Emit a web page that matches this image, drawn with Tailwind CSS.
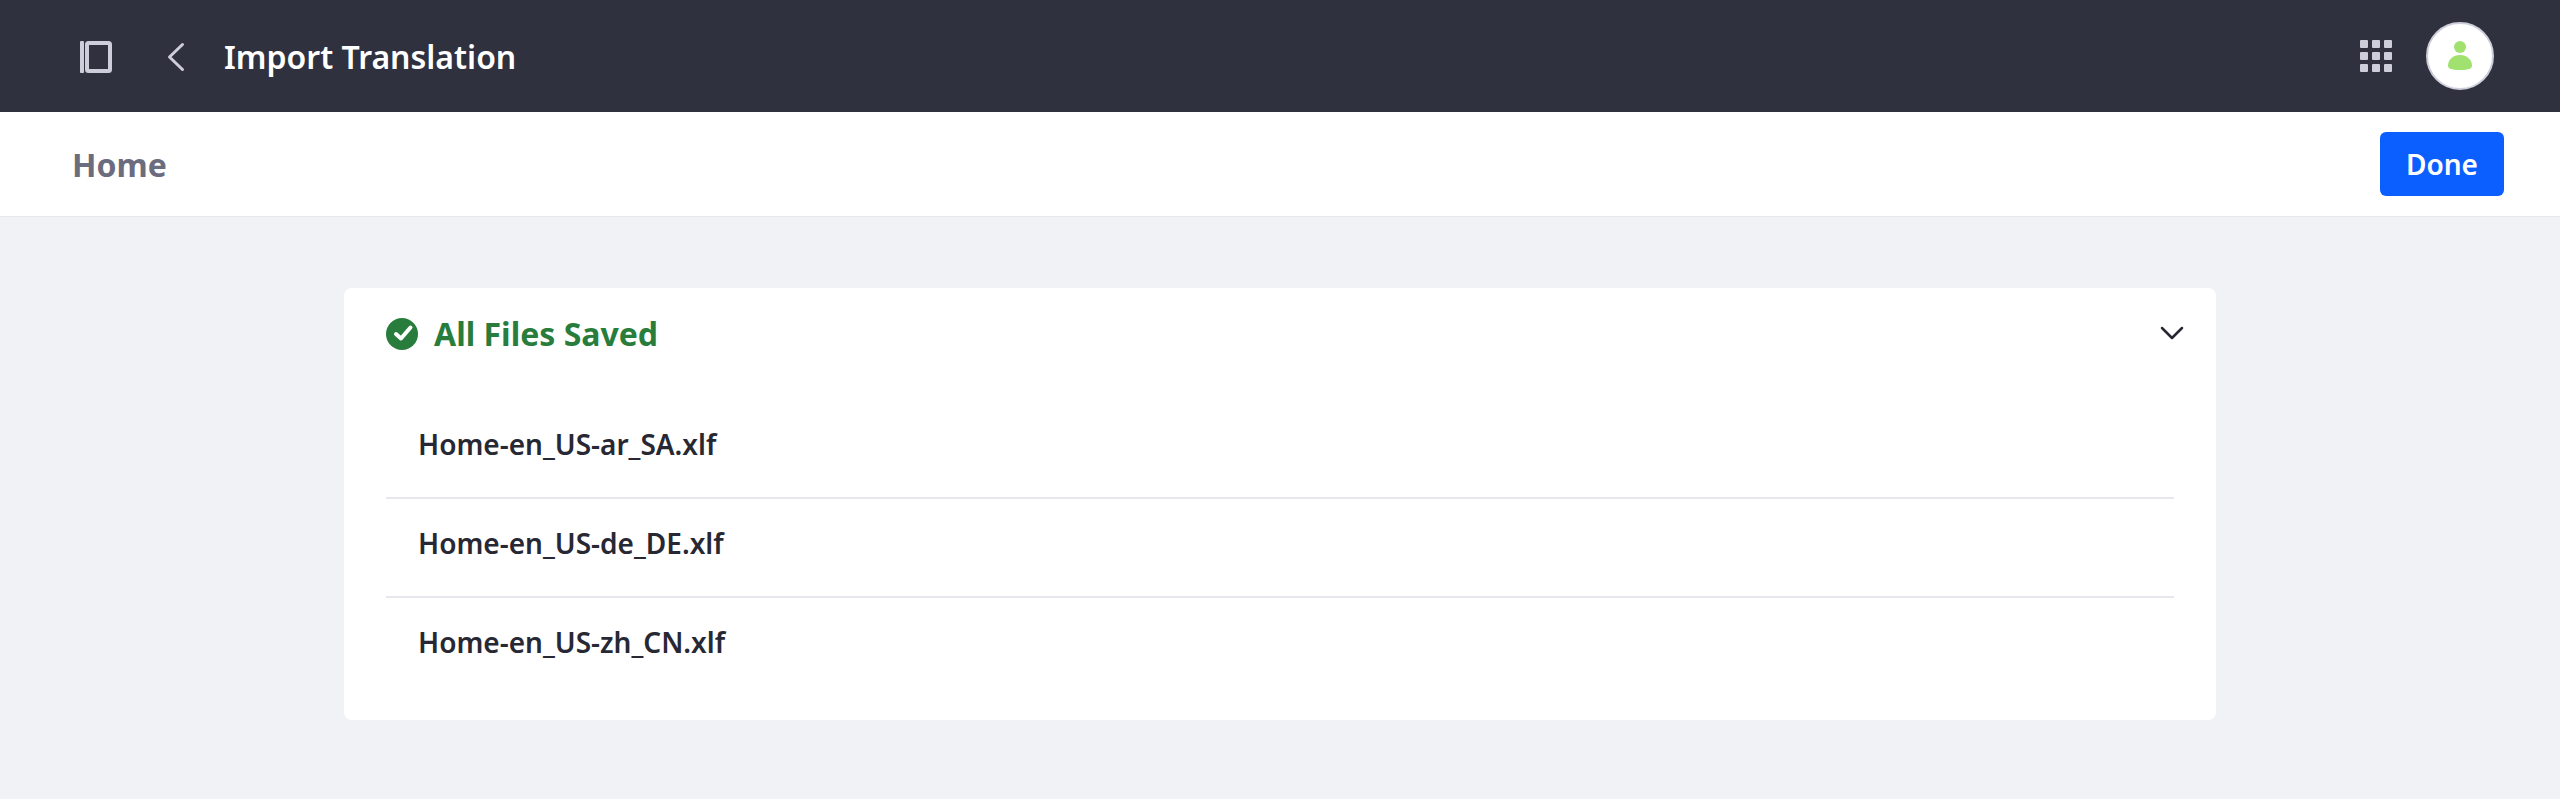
<!DOCTYPE html>
<html>
<head>
  <script src="https://cdn.jsdelivr.net/npm/@tailwindcss/browser@4"></script>
</head>
<body class="bg-[#f1f2f5] font-['Noto_Sans',sans-serif]">
  <div class="h-[799px] overflow-hidden">
    <!-- top bar -->
    <header class="flex items-center h-[112px] bg-[#30313f] pl-[80px] pr-[66px]">
      <svg class="w-[32px] h-[32px] mt-[2px]" viewBox="0 0 32 32" fill="none" stroke="#cdced9" stroke-width="4">
        <path d="M2 1.500v29" stroke-linecap="round"/>
        <rect x="7" y="2" width="23" height="28" rx="1.500"/>
      </svg>
      <svg class="w-[20px] h-[36px] ml-[54px] mt-[2px]" viewBox="0 0 20 36" fill="none" stroke="#cdced9" stroke-width="3" stroke-linecap="round" stroke-linejoin="round">
        <path d="M16.500 5.500 3.500 18l13 12.500"/>
      </svg>
      <h1 class="ml-[38px] mt-[2px] text-[32px] leading-none font-semibold text-white">Import Translation</h1>
      <svg class="w-[32px] h-[32px] ml-auto mr-[34px]" viewBox="0 0 32 32" fill="#cdced9">
        <rect x="0" y="0" width="8" height="8" rx="1"/><rect x="12" y="0" width="8" height="8" rx="1"/><rect x="24" y="0" width="8" height="8" rx="1"/>
        <rect x="0" y="12" width="8" height="8" rx="1"/><rect x="12" y="12" width="8" height="8" rx="1"/><rect x="24" y="12" width="8" height="8" rx="1"/>
        <rect x="0" y="24" width="8" height="8" rx="1"/><rect x="12" y="24" width="8" height="8" rx="1"/><rect x="24" y="24" width="8" height="8" rx="1"/>
      </svg>
      <div class="flex items-center justify-center w-[68px] h-[68px] rounded-full bg-white border-2 border-[#cdced9]">
        <svg class="w-[24px] h-[30px]" viewBox="0 0 24 30" fill="#a0e16f">
          <circle cx="12" cy="6" r="6"/>
          <path d="M12 14c7 0 12 5 12 10.500 0 3-3 4.500-12 4.500S0 27.500 0 24.500C0 19 5 14 12 14z"/>
        </svg>
      </div>
    </header>

    <!-- sub bar -->
    <div class="flex items-center justify-between h-[105px] bg-white border-b border-[#e7e7ed] pl-[72px] pr-[56px]">
      <span class="mt-[2px] text-[32px] leading-none font-bold text-[#6b6c7e]">Home</span>
      <button class="w-[124px] h-[64px] rounded-[6px] bg-[#0b5fff] text-white text-[28px] font-semibold">Done</button>
    </div>

    <!-- card -->
    <main class="w-[1872px] h-[432px] ml-[344px] mt-[71px] rounded-[8px] bg-white px-[42px] pt-[28px]">
      <div class="flex items-center justify-between h-[36px]">
        <div class="flex items-center gap-[16px]">
          <svg class="w-[32px] h-[32px]" viewBox="0 0 32 32">
            <circle cx="16" cy="16" r="16" fill="#287d3c"/>
            <path d="M10 16l5 4.500 9.500-11" fill="none" stroke="#fff" stroke-width="4" stroke-linecap="round" stroke-linejoin="round"/>
          </svg>
          <span class="text-[32px] leading-none font-bold text-[#287d3c]">All Files Saved</span>
        </div>
        <svg class="w-[24px] h-[14px] mr-[-10px] mt-[-2px]" viewBox="0 0 24 14" fill="none" stroke="#272833" stroke-width="2.500" stroke-linecap="round" stroke-linejoin="round">
          <path d="m2 2 10 10L22 2"/>
        </svg>
      </div>
      <ul class="mt-[48px]">
        <li class="flex items-center h-[99px] pb-[10px] pl-[32px] border-b-2 border-[#e7e7ed] text-[28px] font-semibold text-[#272833]">Home-en_US-ar_SA.xlf</li>
        <li class="flex items-center h-[99px] pb-[10px] pl-[32px] border-b-2 border-[#e7e7ed] text-[28px] font-semibold text-[#272833]">Home-en_US-de_DE.xlf</li>
        <li class="flex items-center h-[99px] pb-[12px] pl-[32px] text-[28px] font-semibold text-[#272833]">Home-en_US-zh_CN.xlf</li>
      </ul>
    </main>
  </div>
</body>
</html>
